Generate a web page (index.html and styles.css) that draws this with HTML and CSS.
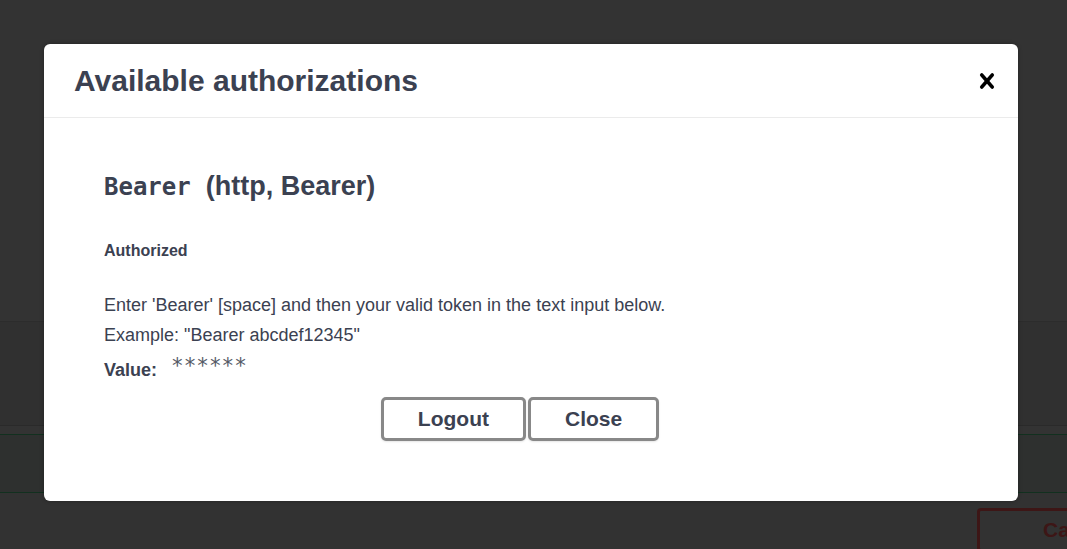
FILE: index.html
```html
<!DOCTYPE html>
<html lang="en">
<head>
<meta charset="utf-8">
<title>Available authorizations</title>
<link rel="stylesheet" href="styles.css">
</head>
<body>
<div class="page">
  <div class="band band-top"></div>
  <div class="band band-mid"></div>
  <div class="band band-op"></div>
  <div class="band band-bottom">
    <button class="btn-cancel">Cancel</button>
  </div>
</div>

<div class="modal">
  <div class="modal-header">
    <h3 class="modal-title">Available authorizations</h3>
    <button class="close-modal" aria-label="Close">
      <svg width="30" height="30" viewBox="0 0 20 20" aria-hidden="true"><path d="M14.348 14.849a1.2 1.2 0 0 1-1.697 0L10 11.819l-2.651 3.029a1.2 1.2 0 1 1-1.697-1.697l2.758-3.150-2.759-3.152a1.2 1.2 0 1 1 1.697-1.697L10 8.183l2.651-3.031a1.2 1.2 0 1 1 1.697 1.697l-2.758 3.152 2.758 3.150a1.2 1.2 0 0 1 0 1.698z"/></svg>
    </button>
  </div>
  <div class="modal-content">
    <h4 class="scheme"><code class="scheme-name">Bearer</code>&nbsp; (http, Bearer)</h4>
    <h6 class="status">Authorized</h6>
    <div class="desc">
      <p>Enter 'Bearer' [space] and then your valid token in the text input below.</p>
      <p>Example: "Bearer abcdef12345"</p>
    </div>
    <div class="value-row"><label class="value-label">Value:</label><span class="value-mask">******</span></div>
    <div class="btn-wrapper">
      <button class="btn">Logout</button>
      <button class="btn">Close</button>
    </div>
  </div>
</div>
</body>
</html>
```
FILE: styles.css
```css
html, body {
  margin: 0;
  padding: 0;
}
body {
  background: #333333;
  font-family: "Liberation Sans", Arial, sans-serif;
  color: #3b4151;
  overflow: hidden;
  height: 549px;
}
.page {
  display: flex;
  flex-direction: column;
  height: 549px;
  overflow: hidden;
}
.band-top {
  height: 321px;
  flex: none;
  background: #333333;
  border-bottom: 1px solid #2c2c2c;
}
.band-mid {
  height: 103px;
  flex: none;
  background: #303030;
  border-bottom: 1px solid #2a2a2a;
  margin-bottom: 8px;
}
.band-op {
  height: 57px;
  flex: none;
  background: #2e302f;
  border-top: 1px solid #12301f;
  border-bottom: 1px solid #12301f;
}
.band-bottom {
  flex: 1;
  min-height: 0;
  background: #323232;
  display: flex;
  justify-content: flex-start;
  align-items: flex-start;
  padding-left: 977px;
  padding-top: 15px;
  box-sizing: border-box;
  overflow: hidden;
}
.btn-cancel {
  flex: none;
  width: 140px;
  height: 44px;
  background: transparent;
  border: 3px solid #3d1616;
  border-radius: 4px;
  color: #3d1616;
  font-family: "Liberation Sans", Arial, sans-serif;
  font-weight: 700;
  font-size: 21px;
  text-align: left;
  padding: 0 0 0 63px;
}

.modal {
  position: absolute;
  left: 44px;
  top: 44px;
  width: 974px;
  height: 457px;
  background: #ffffff;
  border-radius: 6px;
  box-shadow: 0 0 4px rgba(0,0,0,0.3);
}
.modal-header {
  display: flex;
  align-items: center;
  justify-content: space-between;
  height: 73px;
  border-bottom: 1px solid #ebebeb;
  padding: 0 16px 0 30px;
}
.modal-title {
  margin: 0;
  font-size: 30px;
  font-weight: 700;
  color: #3b4151;
}
.close-modal {
  background: none;
  border: none;
  padding: 0;
  width: 30px;
  height: 30px;
  display: flex;
}
.close-modal svg {
  fill: #000000;
}
.modal-content {
  padding: 52px 60px 0 60px;
}
.scheme {
  margin: 0;
  font-size: 27px;
  line-height: 32px;
  font-weight: 700;
}
.scheme-name {
  font-family: "DejaVu Sans Mono", "Liberation Mono", monospace;
  font-size: 24px;
  font-weight: 700;
}
.status {
  margin: 38px 0 0;
  font-size: 16px;
  line-height: 20px;
  font-weight: 700;
}
.desc {
  margin-top: 29px;
}
.desc p {
  margin: 0;
  font-size: 18px;
  line-height: 30px;
}
.value-row {
  margin-top: 4px;
  display: flex;
  align-items: baseline;
  font-size: 18px;
  line-height: 30px;
}
.value-label {
  font-weight: 700;
  margin-right: 14px;
}
.value-mask {
  font-family: "DejaVu Sans Mono", "Liberation Mono", monospace;
  font-size: 21px;
  color: #555a66;
  position: relative;
  top: -3px;
}
.btn-wrapper {
  display: flex;
  justify-content: center;
  gap: 2px;
  margin-top: 12px;
  padding-right: 22px;
}
.btn {
  background: #ffffff;
  border: 3px solid #888888;
  border-radius: 5px;
  padding: 7px 34px 8px;
  font-family: "Liberation Sans", Arial, sans-serif;
  font-size: 21px;
  line-height: 23px;
  font-weight: 700;
  color: #3b4151;
  box-shadow: 0 1px 2px rgba(0,0,0,0.1);
}
```
